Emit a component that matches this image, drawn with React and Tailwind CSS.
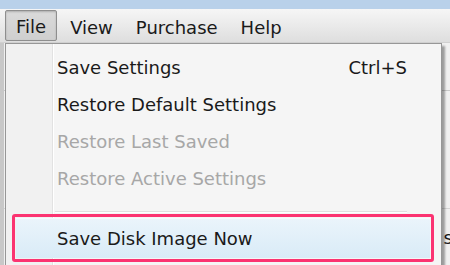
export default function App() {
  const items = [
    { label: 'Save Settings', shortcut: 'Ctrl+S' },
    { label: 'Restore Default Settings' },
    { label: 'Restore Last Saved', disabled: true },
    { label: 'Restore Active Settings', disabled: true },
  ];

  return (
    <div className="w-[450px] h-[265px] overflow-hidden bg-[#f0f0f0] flex flex-col text-[18px] text-[#1a1a1a]" style={{ fontFamily: '"DejaVu Sans", "Noto Sans", sans-serif' }}>
      {/* title bar edge */}
      <div className="h-[9px] bg-[#b9d1ea] shrink-0" />

      {/* menu bar */}
      <div className="h-[34px] shrink-0 flex items-center gap-[3px] pl-[5px] bg-gradient-to-b from-[#f6f6f6] to-[#dedede] border-b border-[#d0d0d0]">
        <div className="h-[31px] px-[10px] pt-[2px] flex items-center border border-[#8e8e8e] rounded-[2px] bg-gradient-to-b from-[#dadada] to-[#cfcfcf] shadow-[inset_0_1px_2px_rgba(0,0,0,0.2)]">File</div>
        <div className="px-[10px] pt-[3px]">View</div>
        <div className="px-[10px] pt-[3px]">Purchase</div>
        <div className="px-[10px] pt-[3px]">Help</div>
      </div>

      {/* window body behind the menu */}
      <div className="relative flex-1 border-l-[4px] border-[#c8c8c8]">
        <div className="flex flex-col">
          <div className="h-[48px] border-b border-[#c8c8c8]" />
          <div className="h-[118px] border-b border-[#d4d4d4]" />
          <div className="h-[56px] flex items-center justify-end">
            <span className="-mr-[14px]">sa</span>
          </div>
        </div>

        {/* dropdown */}
        <div className="absolute left-[1px] top-0 w-[437px] h-[240px] bg-[#f5f5f5] border border-[#979797] shadow-[3px_3px_2px_rgba(0,0,0,0.35)] flex">
          <div className="w-[47px] shrink-0 bg-[#f1f1f1] border-r border-[#e2e2e2] shadow-[1px_0_0_#ffffff]" />
          <div className="flex-1 flex flex-col pt-[5px] pr-[34px]">
            {items.map((it) => (
              <div key={it.label} className={`h-[37px] flex items-center justify-between pl-[4px] ${it.disabled ? 'text-[#a7a7a7]' : ''}`}>
                <span>{it.label}</span>
                {it.shortcut && <span>{it.shortcut}</span>}
              </div>
            ))}
            <div className="h-[16px] flex items-end pl-[2px]">
              <div className="h-[2px] w-full border-t border-[#e0e0e0] border-b-white border-b" />
            </div>
          </div>

          {/* highlighted item with pink callout */}
          <div className="absolute left-[6px] top-[170px] w-[422px] h-[48px] border-[3px] border-[#fb3371] rounded-[3px] p-[1px]">
            <div className="h-full bg-gradient-to-b from-[#eaf4fb] to-[#d9ebf7] border-t border-[#f4f9fd] flex items-center pl-[41px]">
              Save Disk Image Now
            </div>
          </div>
        </div>
      </div>
    </div>
  );
}
